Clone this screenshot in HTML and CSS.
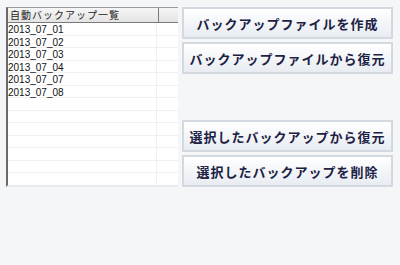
FILE: index.html
```html
<!DOCTYPE html>
<html lang="ja">
<head>
    <meta charset="UTF-8">
    <meta name="viewport" content="width=device-width, initial-scale=1.0">
    <title>自動バックアップ</title>
    <link rel="stylesheet" href="styles.css">
</head>
<body>
    <div class="panel">
        <div class="backup-list">
            <div class="list-head">
                <div class="col-name">自動バックアップ一覧</div>
                <div class="col-extra"></div>
            </div>
            <div class="list-body">
                <div class="row"><span class="col-name">2013_07_01</span><span class="col-extra"></span></div>
                <div class="row"><span class="col-name">2013_07_02</span><span class="col-extra"></span></div>
                <div class="row"><span class="col-name">2013_07_03</span><span class="col-extra"></span></div>
                <div class="row"><span class="col-name">2013_07_04</span><span class="col-extra"></span></div>
                <div class="row"><span class="col-name">2013_07_07</span><span class="col-extra"></span></div>
                <div class="row"><span class="col-name">2013_07_08</span><span class="col-extra"></span></div>
                <div class="row"><span class="col-name"></span><span class="col-extra"></span></div>
                <div class="row"><span class="col-name"></span><span class="col-extra"></span></div>
                <div class="row"><span class="col-name"></span><span class="col-extra"></span></div>
                <div class="row"><span class="col-name"></span><span class="col-extra"></span></div>
                <div class="row"><span class="col-name"></span><span class="col-extra"></span></div>
                <div class="row"><span class="col-name"></span><span class="col-extra"></span></div>
                <div class="row"><span class="col-name"></span><span class="col-extra"></span></div>
                <div class="row"><span class="col-name"></span><span class="col-extra"></span></div>
            </div>
        </div>
        <div class="actions">
            <button class="act-btn">バックアップファイルを作成</button>
            <button class="act-btn">バックアップファイルから復元</button>
            <button class="act-btn act-gap">選択したバックアップから復元</button>
            <button class="act-btn">選択したバックアップを削除</button>
        </div>
    </div>
</body>
</html>
```

FILE: styles.css
```css
body {
    margin: 0;
    padding: 7px 6px;
    background-color: #f4f6f8;
    font-family: "Noto Sans CJK JP", "Liberation Sans", sans-serif;
}
.panel {
    display: flex;
    gap: 4px;
}
.backup-list {
    width: 172px;
    height: 180px;
    box-sizing: border-box;
    background: white;
    border-left: 2px solid #6a6a6a;
    border-top: 1px solid #9a9a9a;
    border-bottom: 2px solid #e8eaec;
    overflow: hidden;
}
.list-head {
    display: flex;
    height: 14px;
    background: linear-gradient(#f6f6f6, #e4e4e4);
    border-bottom: 1px solid #7a7a7a;
}
.list-head .col-name {
    font-size: 10px;
    line-height: 14px;
    letter-spacing: 1px;
    color: #222;
    padding-left: 2px;
    border-right: 1px solid #7a7a7a;
}
.col-name {
    width: 148px;
    flex-shrink: 0;
}
.col-extra {
    flex: 1;
}
.row {
    display: flex;
    height: 11.5px;
    border-bottom: 1px solid #f0f0f0;
}
.row .col-name {
    font-family: "Liberation Sans", sans-serif;
    font-size: 10px;
    line-height: 13px;
    color: #111;
    border-right: 1px solid #f0f0f0;
}
.actions {
    display: flex;
    flex-direction: column;
    gap: 3px;
    width: 211px;
}
.act-btn {
    height: 32px;
    margin: 0;
    padding: 0;
    border: 2px solid #d2d9e0;
    background: linear-gradient(#ffffff, #e8ecf1);
    font-family: "Noto Sans CJK JP", sans-serif;
    font-size: 13px;
    font-weight: bold;
    letter-spacing: 1px;
    color: #1c2244;
    cursor: pointer;
}
.act-gap {
    margin-top: 43px;
}
```
